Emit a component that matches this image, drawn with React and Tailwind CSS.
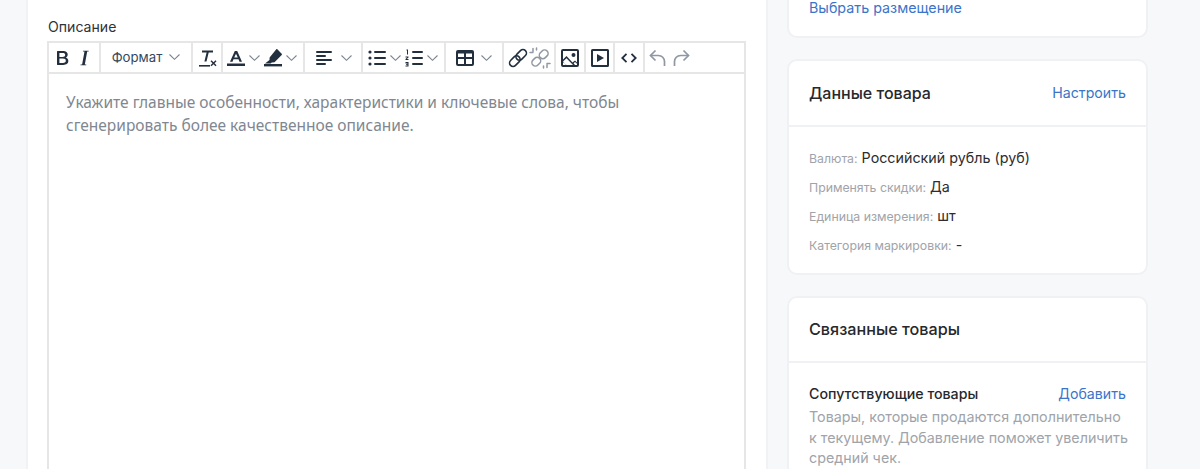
const ink = "#222f3e";

function Chevron() {
  return (
    <svg width="11" height="10" viewBox="0 0 11 10" fill="none" stroke="#7b8490" strokeWidth="1.100" className="shrink-0">
      <path d="M0.500 2.500 L5.500 7.300 L10.500 2.500" />
    </svg>
  );
}

function Glyph({ children, w = 24, h = 24, className = "" }) {
  return (
    <svg width={w} height={h} viewBox="0 0 24 24" fill={ink} className={"shrink-0 " + className}>
      {children}
    </svg>
  );
}

const Bold = () => (
  <Glyph><path fillRule="evenodd" d="M7.800 19c-.3 0-.5 0-.6-.2-.2-.1-.2-.3-.2-.6V5.800c0-.3 0-.5.2-.6.1-.2.3-.2.6-.2h5c1.600 0 2.800.3 3.600 1 .9.700 1.300 1.500 1.300 2.600 0 .7-.2 1.300-.6 1.900-.4.500-.9.900-1.500 1.100.8.200 1.500.600 2 1.200.5.600.7 1.300.7 2.100 0 1.200-.4 2.200-1.300 2.900-.9.700-2.100 1.100-3.800 1.100H7.800zM9.400 11h3.100c.9 0 1.500-.2 2-.5.4-.4.7-.9.7-1.500s-.2-1.100-.7-1.400c-.4-.4-1.100-.5-2-.5H9.400V11zm0 5.900h3.500c1 0 1.700-.2 2.200-.6.5-.4.7-.9.7-1.600 0-.7-.2-1.200-.7-1.600-.5-.4-1.200-.6-2.200-.6H9.400v4.400z" /></Glyph>
);
const Italic = () => (
  <Glyph><path d="M16.700 4.700l-.1.9h-1.400L12.800 18.400h1.500l-.1.900H8.500l.1-.9h1.500L12.500 5.600H11l.1-.9z" /></Glyph>
);
const ClearFormat = () => (
  <Glyph>
    <path d="M7 4.500h11v2h-4.300L11.500 15.500H9.400L11.600 6.500H7z" />
    <rect x="4" y="19" width="11" height="1.600" />
    <path d="M15.500 15.300l1-1 2 2 2-2 1 1-2 2 2 2-1 1-2-2-2 2-1-1 2-2z" />
  </Glyph>
);
const TextColor = () => (
  <Glyph>
    <path fillRule="evenodd" d="M10.800 5h2.400L18 15.800h-2.500l-1-2.500H9.500l-1 2.500H6L10.800 5zm1.200 2.800L10.200 11.500h3.600L12 7.800z" />
    <rect x="3" y="17.500" width="18" height="2.500" />
  </Glyph>
);
const Highlight = () => (
  <Glyph>
    <path d="M16.300 3.300l4.400 4.400c.4.400.4 1 0 1.400L13.500 16.300l-2.800.3-1 1H4l4.500-3.500.1-2.700 6.700-8.100c.3-.4.7-.4 1-.0z" />
    <rect x="3" y="18" width="18" height="2.400" />
  </Glyph>
);
const AlignLeft = () => (
  <Glyph>
    <rect x="4" y="5" width="16" height="2" rx="1" />
    <rect x="4" y="9" width="10" height="2" rx="1" />
    <rect x="4" y="13" width="16" height="2" rx="1" />
    <rect x="4" y="17" width="10" height="2" rx="1" />
  </Glyph>
);
const BulList = () => (
  <Glyph>
    <circle cx="5" cy="6" r="1.600" /><circle cx="5" cy="12" r="1.600" /><circle cx="5" cy="18" r="1.600" />
    <rect x="9" y="5" width="12" height="2" rx="1" />
    <rect x="9" y="11" width="12" height="2" rx="1" />
    <rect x="9" y="17" width="12" height="2" rx="1" />
  </Glyph>
);
const NumList = () => (
  <Glyph>
    <rect x="10" y="5" width="11" height="2" rx="1" />
    <rect x="10" y="11" width="11" height="2" rx="1" />
    <rect x="10" y="17" width="11" height="2" rx="1" />
    <path d="M4.500 3.500h1.500v5H5V4.500h-.5zM3.500 10.500h3v.9l-1.700 1.700h1.700v.9h-3v-.9l1.700-1.700H3.500zM3.500 16h3v4.500h-3v-.9h2v-.9H4v-.8h1.500v-.5h-2z" />
  </Glyph>
);
const Table = () => (
  <Glyph>
    <path fillRule="evenodd" d="M19 4a2 2 0 012 2v12a2 2 0 01-2 2H5a2 2 0 01-2-2V6a2 2 0 012-2h14zM5 13v5h6v-5H5zm8 0v5h6v-5h-6zm6-2V7.500H13V11h6zm-8 0V7.500H5V11h6z" />
  </Glyph>
);
const LinkIcon = () => (
  <svg width="24" height="24" viewBox="0 0 24 24" fill="none" stroke={ink} strokeWidth="1.600" className="shrink-0">
    <g transform="rotate(-45 12 12)">
      <rect x="1.500" y="8.500" width="12" height="7" rx="3.500" />
      <rect x="10.500" y="8.500" width="12" height="7" rx="3.500" />
    </g>
  </svg>
);
const Unlink = () => (
  <svg width="24" height="24" viewBox="0 0 24 24" fill="none" stroke="#8f97a2" strokeWidth="1.500" strokeLinecap="round" className="shrink-0">
    <g transform="rotate(-45 12 12)">
      <rect x="2" y="8.500" width="9.500" height="7" rx="3.500" />
      <rect x="12.500" y="8.500" width="9.500" height="7" rx="3.500" />
    </g>
    <path d="M5 2.500v3M2 6.500h3M8.500 2v2M19 21.500v-3M22 17.500h-3M15.500 22v-2" />
  </svg>
);
const ImageIcon = () => (
  <Glyph>
    <path fillRule="evenodd" d="M5 3h14a2 2 0 012 2v14a2 2 0 01-2 2H5a2 2 0 01-2-2V5a2 2 0 012-2zm0 2v8.500l3.500-3.500 6 6.500 2.500-2 2 2V5H5zm0 11.300V19h3.500zm14 1.500l-2-1.800-1.400 1.200L17 19h2zM8 19h7l-6.500-6.800L5 15.500zM15.500 7a2 2 0 110 4 2 2 0 010-4z" />
  </Glyph>
);
const Media = () => (
  <Glyph>
    <path fillRule="evenodd" d="M4.500 3h15A1.500 1.500 0 0121 4.500v15a1.500 1.500 0 01-1.500 1.500h-15A1.500 1.500 0 013 19.500v-15A1.500 1.500 0 014.500 3zM5 5v14h14V5H5z" />
    <path d="M9 8l7 4-7 4z" />
  </Glyph>
);
const Code = () => (
  <svg width="24" height="24" viewBox="0 0 24 24" fill="none" stroke={ink} strokeWidth="1.800" className="shrink-0">
    <path d="M9.500 7.800L5.300 12l4.200 4.200M14.500 7.800l4.200 4.200-4.200 4.200" />
  </svg>
);
const Undo = () => (
  <svg width="24" height="24" viewBox="0 0 24 24" fill="none" stroke="#8f97a2" strokeWidth="1.700" className="shrink-0">
    <path d="M9.500 4.500L4.500 9.500l5 5" />
    <path d="M4.500 9.500h8a6 6 0 016 6v4.500" />
  </svg>
);
const Redo = () => (
  <svg width="24" height="24" viewBox="0 0 24 24" fill="none" stroke="#8f97a2" strokeWidth="1.700" className="shrink-0">
    <path d="M14.500 4.500l5 5-5 5" />
    <path d="M19.500 9.500h-8a6 6 0 00-6 6v4.500" />
  </svg>
);

function Group({ w, children, last }) {
  return (
    <div className={"flex h-full shrink-0 items-center justify-center border-[#e6e6e6] " + w + (last ? "" : " border-r-2")}>
      {children}
    </div>
  );
}

function Toolbar() {
  return (
    <div className="flex h-[31px] items-center border-b-2 border-[#e6e6e6]">
      <Group w="w-[52px]"><div className="flex items-center gap-0 -ml-[2px]"><Bold /><div className="-ml-[2px]"><Italic /></div></div></Group>
      <Group w="w-[92px]">
        <div className="flex items-center gap-[7px]">
          <span className="text-[13.200px] text-[#34495e] font-['Inter',sans-serif]">Формат</span>
          <Chevron />
        </div>
      </Group>
      <Group w="w-[30px]"><ClearFormat /></Group>
      <Group w="w-[82px]">
        <div className="-ml-[6px] flex items-center gap-[1px]">
          <TextColor /><Chevron /><Highlight /><Chevron />
        </div>
      </Group>
      <Group w="w-[58px]"><div className="-ml-[3px] flex items-center gap-[5px]"><AlignLeft /><Chevron /></div></Group>
      <Group w="w-[83px]">
        <div className="-ml-[4px] flex items-center gap-[1px]"><BulList /><Chevron /><NumList /><Chevron /></div>
      </Group>
      <Group w="w-[58px]"><div className="-ml-[3px] flex items-center gap-[4px]"><Table /><Chevron /></div></Group>
      <Group w="w-[52px]"><div className="-ml-[1px] flex items-center -space-x-[2px]"><LinkIcon /><Unlink /></div></Group>
      <Group w="w-[30px]"><ImageIcon /></Group>
      <Group w="w-[29px]"><Media /></Group>
      <Group w="w-[30px]"><Code /></Group>
      <Group w="w-[48px]" last><div className="flex items-center -space-x-[1px]"><Undo /><Redo /></div></Group>
    </div>
  );
}

function Detail({ label, value }) {
  return (
    <div className="flex h-[29px] items-baseline gap-[4px] whitespace-nowrap">
      <span className="text-[12.300px] text-[#a0a4aa]">{label}</span>
      <span className="text-[14.300px] text-[#2b2d31]">{value}</span>
    </div>
  );
}

export default function App() {
  return (
    <div className="flex h-[469px] w-[1200px] items-start overflow-hidden bg-[#f7f8fa] font-['Inter',sans-serif]">
      <main className="ml-[26px] h-[469px] w-[742px] shrink-0 border-x-2 border-[#f1f2f5] bg-white px-[19px] pt-[18px]">
        <div className="mb-[5px] h-[18px] pl-[1px] text-[14.100px] leading-[18px] text-[#2f3237]">Описание</div>
        <div className="h-[500px] w-[699px] border-2 border-[#e6e6e6]">
          <Toolbar />
          <div className="px-[17px] pt-[17px] font-['Noto_Sans',sans-serif] text-[15.500px] leading-[23px] text-[#7f8791]">
            Укажите главные особенности, характеристики и ключевые слова, чтобы<br />
            сгенерировать более качественное описание.
          </div>
        </div>
      </main>

      <aside className="ml-[19px] flex w-[361px] shrink-0 flex-col gap-[21px]">
        <section className="-mt-[1px] h-[39px] rounded-b-[10px] border-2 border-t-0 border-[#f0f1f4] bg-white px-[20px]">
          <a className="block whitespace-nowrap text-[14.300px] leading-[17px] text-[#3b74c9]">Выбрать размещение</a>
        </section>

        <section className="h-[216px] rounded-[10px] border-2 border-[#f0f1f4] bg-white">
          <header className="flex h-[66px] items-center justify-between border-b-2 border-[#f0f1f4] px-[20px]">
            <h2 className="text-[16px] font-medium text-[#26282c]">Данные товара</h2>
            <a className="text-[14.200px] text-[#3b74c9]">Настроить</a>
          </header>
          <div className="px-[20px] pt-[20px]">
            <Detail label="Валюта:" value="Российский рубль (руб)" />
            <Detail label="Применять скидки:" value="Да" />
            <Detail label="Единица измерения:" value="шт" />
            <Detail label="Категория маркировки:" value="-" />
          </div>
        </section>

        <section className="h-[200px] rounded-t-[10px] border-2 border-[#f0f1f4] bg-white">
          <header className="flex h-[65px] items-center border-b-2 border-[#f0f1f4] px-[20px]">
            <h2 className="text-[16.200px] font-medium text-[#26282c]">Связанные товары</h2>
          </header>
          <div className="px-[20px] pt-[22px]">
            <div className="flex items-center justify-between">
              <h3 className="text-[14.200px] font-medium leading-[17px] text-[#26282c]">Сопутствующие товары</h3>
              <a className="text-[14.200px] leading-[17px] text-[#3b74c9]">Добавить</a>
            </div>
            <p className="mt-[5px] whitespace-nowrap text-[14.300px] leading-[20.500px] text-[#a0a4aa]">
              Товары, которые продаются дополнительно<br />
              к текущему. Добавление поможет увеличить<br />
              средний чек.
            </p>
          </div>
        </section>
      </aside>
    </div>
  );
}
